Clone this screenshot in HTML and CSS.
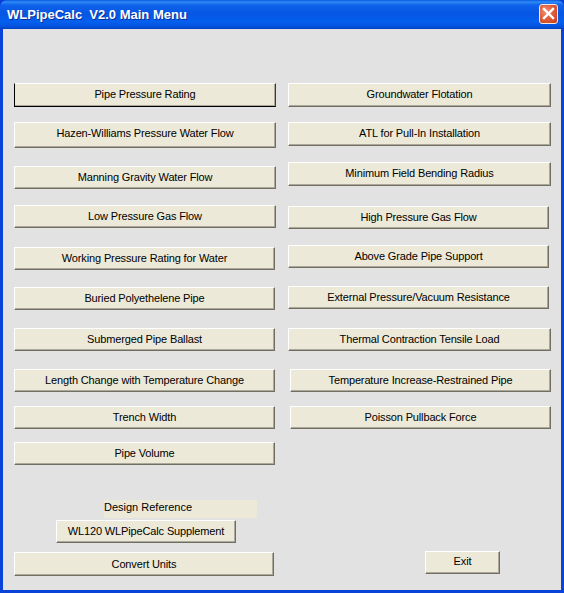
FILE: index.html
```html
<!DOCTYPE html>
<html lang="en">
<head>
<meta charset="utf-8">
<title>WLPipeCalc V2.0 Main Menu</title>
<link rel="stylesheet" href="styles.css">
</head>
<body>
<div class="window">
  <header class="titlebar">
    <span class="title">WLPipeCalc&nbsp; V2.0 Main Menu</span>
    <span class="close" aria-label="Close">
      <svg width="13" height="13" viewBox="0 0 13 13"><path d="M2 2 L11 11 M11 2 L2 11" stroke="#fff" stroke-width="2.4" stroke-linecap="square" fill="none"/></svg>
    </span>
  </header>
  <main class="client">
    <div class="col col-left">
      <button class="btn w262 h24 default">Pipe Pressure Rating</button>
      <button class="btn w262 h26 m15">Hazen-Williams Pressure Water Flow</button>
      <button class="btn w262 h23 m18">Manning Gravity Water Flow</button>
      <button class="btn w262 h23 m16">Low Pressure Gas Flow</button>
      <button class="btn w261 h23 m19">Working Pressure Rating for Water</button>
      <button class="btn w261 h23 m17">Buried Polyethelene Pipe</button>
      <button class="btn w261 h23 m18">Submerged Pipe Ballast</button>
      <button class="btn w261 h23 m18">Length Change with Temperature Change</button>
      <button class="btn w261 h23 m14">Trench Width</button>
      <button class="btn w261 h23 m13">Pipe Volume</button>
      <div class="label">Design Reference</div>
      <button class="btn supplement">WL120 WLPipeCalc Supplement</button>
      <button class="btn convert">Convert Units</button>
    </div>
    <div class="col col-right">
      <button class="btn w263 h24">Groundwater Flotation</button>
      <button class="btn w263 h24 m15">ATL for Pull-In Installation</button>
      <button class="btn w263 h24 m16">Minimum Field Bending Radius</button>
      <button class="btn w261 h23 m20">High Pressure Gas Flow</button>
      <button class="btn w261 h23 m16">Above Grade Pipe Support</button>
      <button class="btn w261 h23 m18">External Pressure/Vacuum Resistance</button>
      <button class="btn w263 h23 m19">Thermal Contraction Tensile Load</button>
      <button class="btn w261 h23 m18 shift2">Temperature Increase-Restrained Pipe</button>
      <button class="btn w261 h23 m14 shift2">Poisson Pullback Force</button>
      <button class="btn exit">Exit</button>
    </div>
  </main>
</div>
</body>
</html>
```
FILE: styles.css
```css
* { box-sizing: border-box; }
html, body { margin: 0; padding: 0; }
body { width: 564px; height: 593px; overflow: hidden; background: #0a3bd8; font-family: "Liberation Sans", Arial, sans-serif; }
.window { width: 564px; height: 593px; display: flex; flex-direction: column; background: #0a43d8; border-radius: 7px 7px 0 0; }
.titlebar {
  height: 29px; flex: none; display: flex; align-items: center; justify-content: space-between;
  padding: 0 6px 0 7px;
  background: linear-gradient(180deg, #0a5ae0 0, #2d8cf5 2px, #0f62ea 5px, #0556e4 14px, #0560ee 22px, #0450d8 27px, #033fc0 29px);
  border-radius: 7px 7px 0 0;
}
.title { color: #fff; font: bold 13px/16px "Liberation Sans", Arial, sans-serif; text-shadow: 1px 1px 0 #0a2f9c; white-space: nowrap; }
.close {
  width: 19px; height: 20px; margin-top: -2px; display: flex; align-items: center; justify-content: center;
  border: 1px solid #f4e8e0; border-radius: 3px;
  background: radial-gradient(circle at 35% 35%, #f09070 0, #e0603c 45%, #c83a18 100%);
}
.client { flex: 1; display: flex; margin: 0 3px 3px 3px; background: #e2e2e2; padding: 54px 0 0 11px; }
.col { display: flex; flex-direction: column; align-items: flex-start; }
.col-left { width: 274px; }
.col-right { flex: 1; }
.btn {
  display: block; padding: 0 0 1px; background: #ece9d8; color: #000;
  font: 11px/14px "Liberation Sans", Arial, sans-serif; letter-spacing: -0.14px; text-align: center; white-space: nowrap;
  border: 1px solid; border-color: #fff #716f64 #716f64 #fff;
  box-shadow: inset -1px -1px 0 #aca899;
}
.default { border-color: #fff #3c3b34 #000 #000; }
.w261 { width: 261px; } .w262 { width: 262px; } .w263 { width: 263px; }
.h23 { height: 23px; }
.h24 { height: 24px; padding-bottom: 2px; }
.h26 { height: 26px; padding-bottom: 5px; }
.m13 { margin-top: 13px; } .m14 { margin-top: 14px; } .m15 { margin-top: 15px; } .m16 { margin-top: 16px; }
.m17 { margin-top: 17px; } .m18 { margin-top: 18px; } .m19 { margin-top: 19px; } .m20 { margin-top: 20px; }
.shift2 { margin-left: 2px; }
.label { width: 153px; height: 18px; margin: 35px 0 0 90px; background: #ece9d8; font-size: 11px; line-height: 14px; color: #000; }
.supplement { width: 180px; height: 23px; margin: 2px 0 0 42px; }
.convert { width: 260px; height: 24px; margin-top: 9px; }
.exit { width: 75px; height: 23px; margin: 122px 0 0 137px; padding-bottom: 3px; }
```
